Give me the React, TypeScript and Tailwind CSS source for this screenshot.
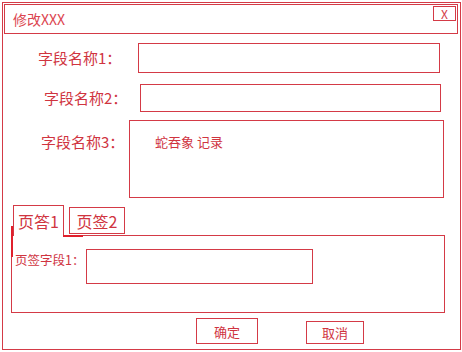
export default function App() {
  const line = "border border-[#d43a46]";
  const font = { fontFamily: '"Noto Sans CJK SC", "Noto Sans", sans-serif' };
  return (
    <div className="w-[462px] h-[352px] bg-white pl-[2px] pt-[2px] text-[#d0343f]" style={font}>
      <div className={`w-[459px] h-[348px] ${line} flex flex-col`}>
        {/* title bar */}
        <div className={`mt-[1px] ml-[1px] w-[454px] h-[30px] ${line} flex items-start justify-between`}>
          <span className="ml-[8px] mt-[4px] text-[14px] leading-[20px] text-[#dc4650]">修改XXX</span>
          <button className={`mt-[1px] mr-[1px] w-[23px] h-[15px] ${line} flex items-center justify-center text-[12px] leading-none text-[#d43a46]`}>
            X
          </button>
        </div>

        {/* field 1 */}
        <div className="mt-[9px] flex items-center">
          <label className="ml-[35px] w-[100px] text-[15px] leading-[20px]">字段名称1：</label>
          <div className={`w-[302px] h-[30px] ${line}`} />
        </div>

        {/* field 2 */}
        <div className="mt-[11px] flex items-center">
          <label className="ml-[41px] w-[96px] text-[15px] leading-[20px]">字段名称2：</label>
          <div className={`w-[301px] h-[28px] ${line}`} />
        </div>

        {/* field 3 */}
        <div className="mt-[8px] flex items-start">
          <label className="ml-[38px] mt-[12px] w-[88px] text-[15px] leading-[20px]">字段名称3：</label>
          <div className={`w-[315px] h-[78px] ${line} pl-[25px] pt-[12px] text-[13px] leading-[18px]`}>
            蛇吞象 记录
          </div>
        </div>

        {/* tabs */}
        <div className="relative mt-[7px] flex items-start h-[30px]">
          <div className="ml-[10px] w-[51px] h-[31px] border-t border-l border-r border-[#d43a46] bg-white relative z-10 flex items-center justify-center text-[16px] leading-[20px]">
            页答1
          </div>
          <div className={`ml-[5px] mt-[2px] w-[56px] h-[27px] ${line} flex items-center justify-center text-[16px] leading-[20px]`}>
            页签2
          </div>
          <div className="absolute left-[8px] top-[21px] w-[2px] h-[31px] bg-[#e0202c] z-20" />
          <div className="absolute left-[60px] top-[30px] w-[20px] h-[2px] bg-[#e0202c] z-20" />
        </div>
        <div className={`ml-[8px] w-[434px] h-[78px] ${line} flex items-start`}>
          <label className="ml-[3px] mt-[16px] w-[71px] text-[12.5px] leading-[16px]">页签字段1：</label>
          <div className={`mt-[13px] w-[227px] h-[35px] ${line}`} />
        </div>

        {/* buttons */}
        <div className="flex items-start">
          <button className={`ml-[193px] mt-[5px] w-[62px] h-[26px] ${line} text-[13px] leading-none text-[#d0343f]`}>
            确定
          </button>
          <button className={`ml-[48px] mt-[8px] w-[58px] h-[23px] ${line} text-[13px] leading-none text-[#d0343f]`}>
            取消
          </button>
        </div>
      </div>
    </div>
  );
}
